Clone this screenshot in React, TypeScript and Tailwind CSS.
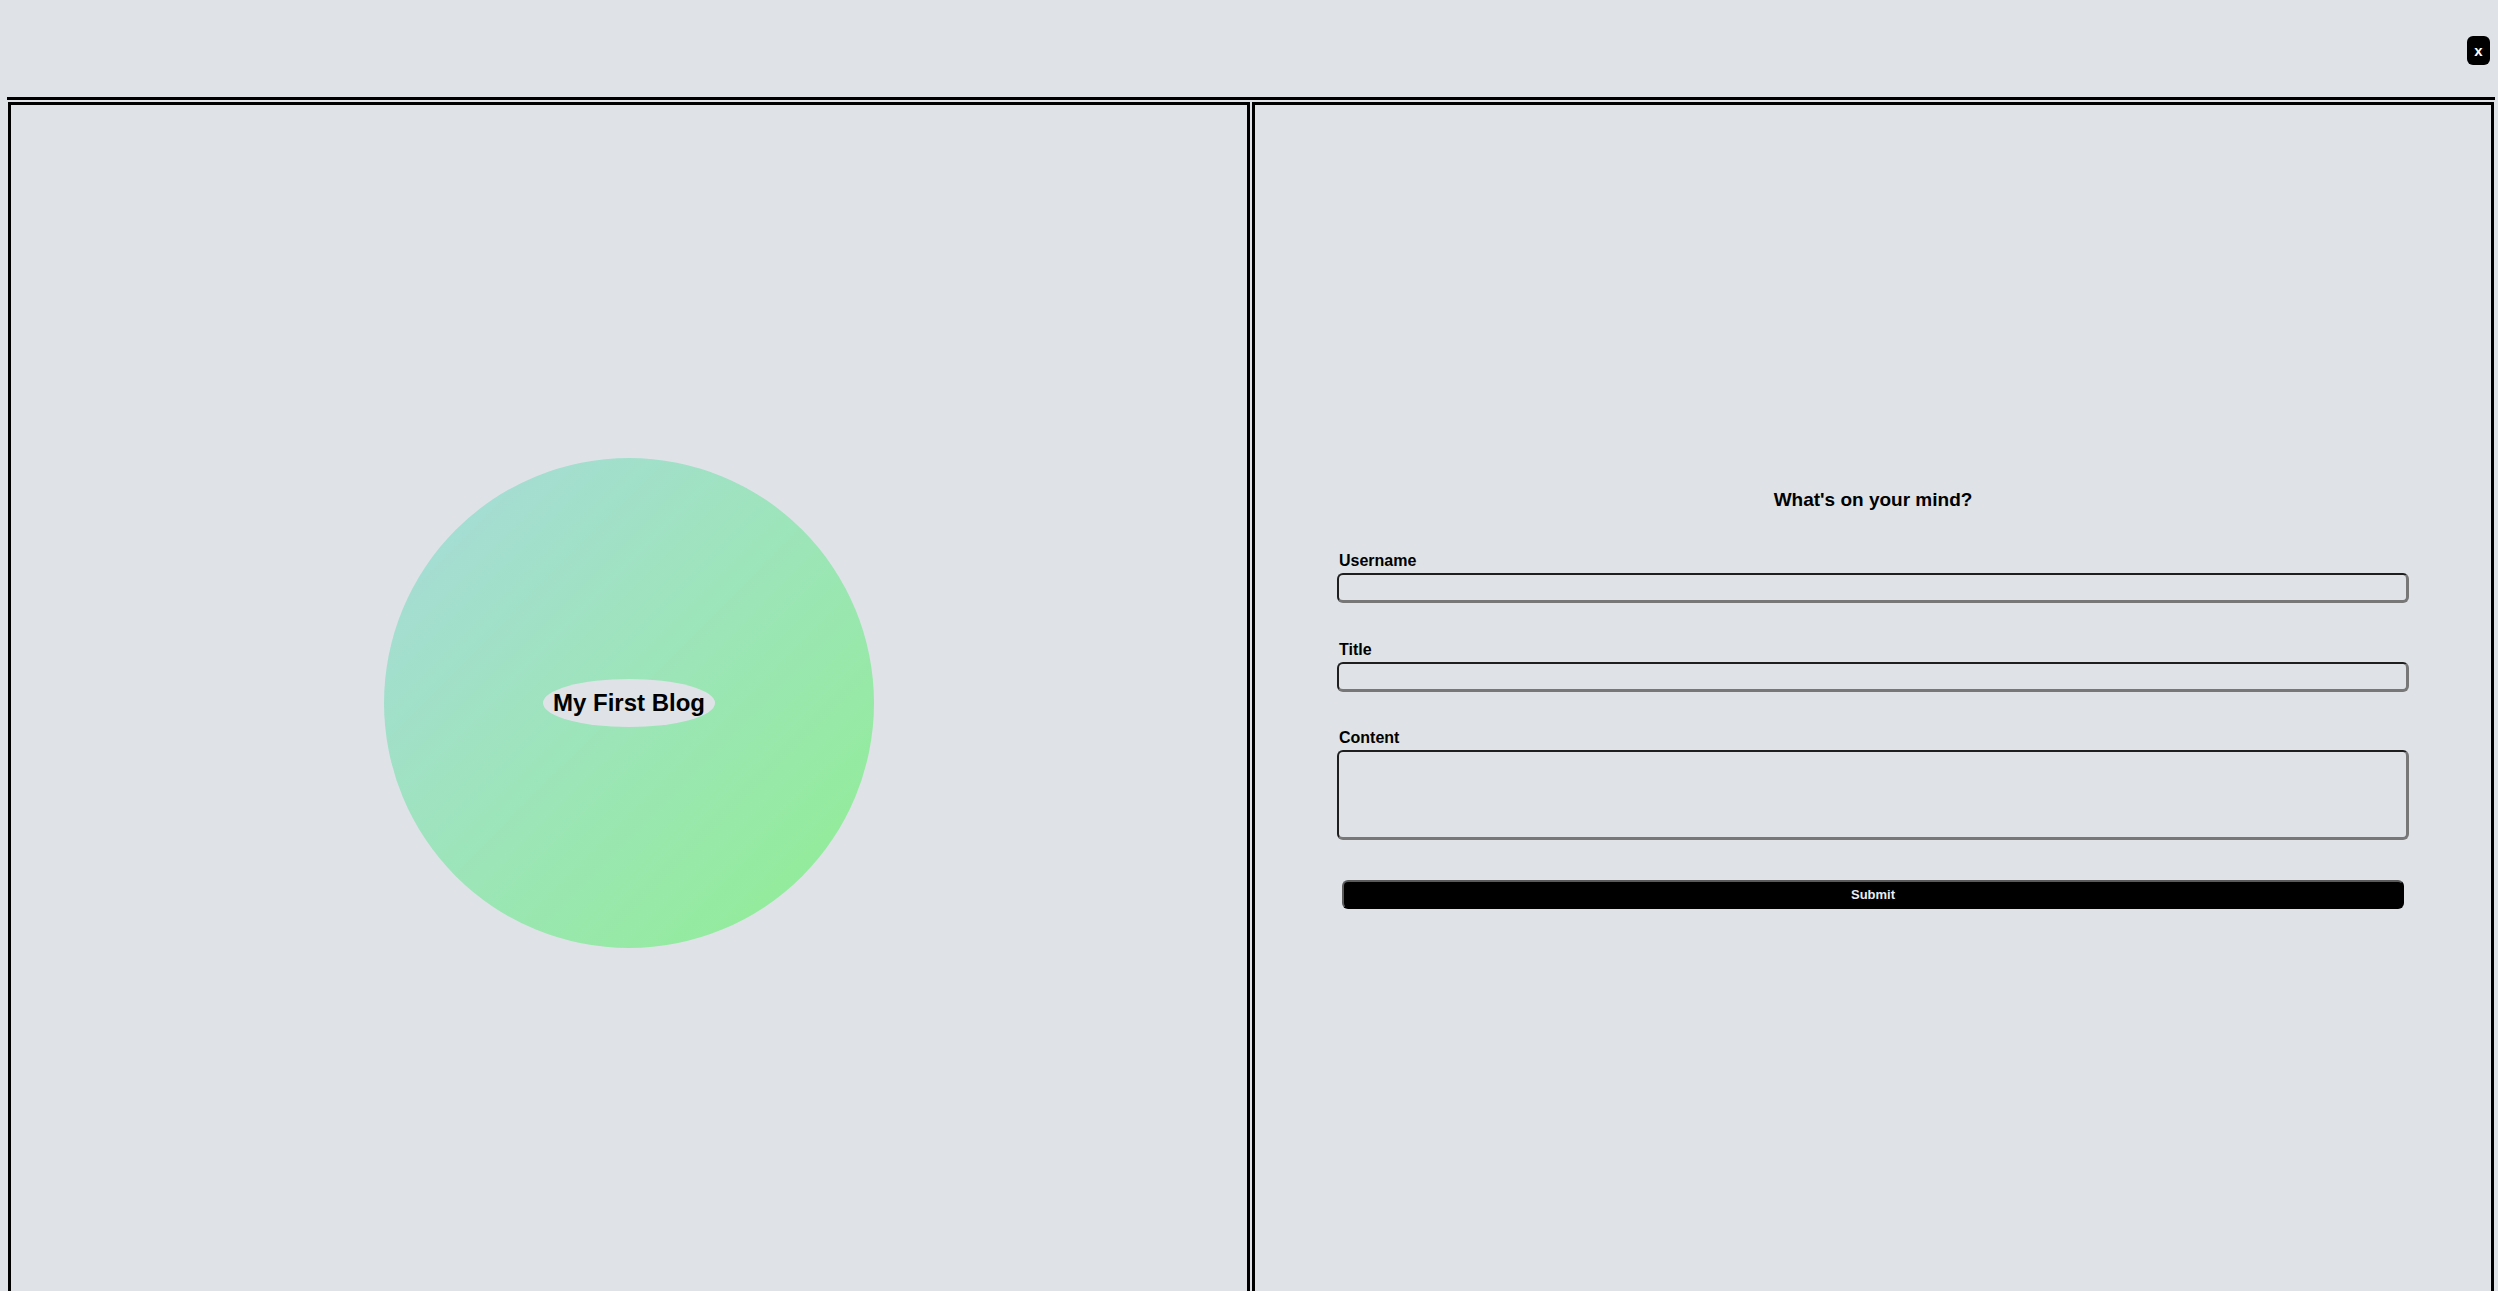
import React, { useState } from 'react';

// Blog composer: a banner circle on the left, the post form on the right.
const inputBorder =
  'w-full rounded-[6px] border-t-2 border-l-2 border-b-[3px] border-r-[3px] border-t-[#1e1e1e] border-l-[#1e1e1e] border-b-[#777777] border-r-[#777777] bg-transparent outline-none px-2';

const Field: React.FC<{ label: string; children: React.ReactNode }> = ({ label, children }) => (
  <div className="flex flex-col">
    <label className="ml-[2px] text-[16px] font-bold leading-[18px] text-black">{label}</label>
    <div className="mt-[3px]">{children}</div>
  </div>
);

export default function App() {
  const [form, setForm] = useState({ username: '', title: '', content: '' });

  return (
    <div
      className="min-h-screen bg-[#dfe3e8] text-black"
      style={{ fontFamily: '"Liberation Sans", Arial, sans-serif' }}
    >
      {/* Top bar */}
      <header className="ml-[7px] flex h-[100px] w-[2488px] items-start justify-end border-b-[3px] border-black pr-[5px] pt-[36px]">
        <button className="flex h-[29px] w-[23px] items-center justify-center rounded-[6px] bg-black text-[15px] font-bold leading-none text-white">
          x
        </button>
      </header>

      <main className="ml-[8px] mt-[2px] flex gap-[2px]">
        {/* Banner */}
        <section className="flex h-[1202px] w-[1242px] items-center justify-center border-[3px] border-black">
          <div className="flex h-[490px] w-[490px] items-center justify-center rounded-full bg-gradient-to-br from-[#a8dadc] to-[#90ee90]">
            <h1 className="rounded-[50%] bg-[#dfe3e8] px-[10px] py-[10px] text-[24px] font-bold leading-[28px]">
              My First Blog
            </h1>
          </div>
        </section>

        {/* Form */}
        <section className="flex h-[1202px] w-[1242px] justify-center border-[3px] border-black pt-[384px]">
          <form
            className="flex w-[1072px] flex-col"
            onSubmit={(e) => e.preventDefault()}
          >
            <h2 className="mb-[41px] text-center text-[19px] font-bold leading-[22px]">What's on your mind?</h2>
            <Field label="Username">
              <input
                className={`${inputBorder} h-[30px]`}
                value={form.username}
                onChange={(e) => setForm({ ...form, username: e.target.value })}
              />
            </Field>
            <div className="mt-[38px]">
              <Field label="Title">
                <input
                  className={`${inputBorder} h-[30px]`}
                  value={form.title}
                  onChange={(e) => setForm({ ...form, title: e.target.value })}
                />
              </Field>
            </div>
            <div className="mt-[37px]">
              <Field label="Content">
                <textarea
                  className={`${inputBorder} block h-[90px] resize-none`}
                  value={form.content}
                  onChange={(e) => setForm({ ...form, content: e.target.value })}
                />
              </Field>
            </div>
            <button
              type="submit"
              className="mx-[5px] mt-[40px] h-[29px] rounded-[6px] border-2 border-t-[#5a5a5a] border-l-[#5a5a5a] border-b-black border-r-black bg-black text-[13px] font-bold leading-none text-[#e8eef2]"
            >
              Submit
            </button>
          </form>
        </section>
      </main>
    </div>
  );
}
